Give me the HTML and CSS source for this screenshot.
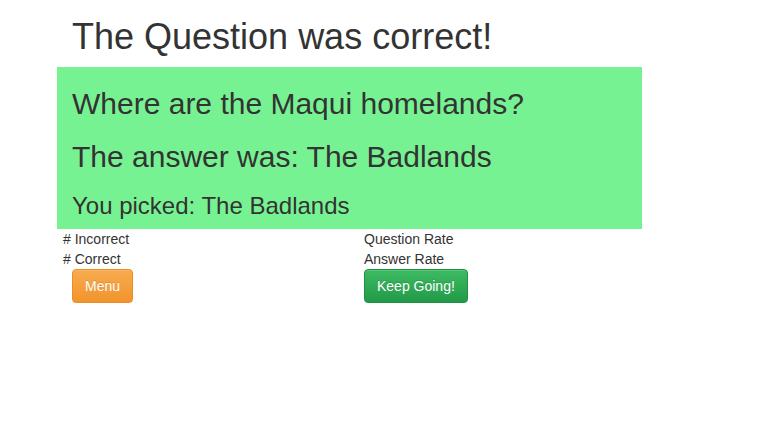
FILE: index.html
```html
<!DOCTYPE html>
<html>
<head>
<meta charset="utf-8">
<link rel="stylesheet" href="styles.css">
</head>
<body>
<div class="page">
  <h1 class="title">The Question was correct!</h1>
  <div class="result">
    <h2 class="question">Where are the Maqui homelands?</h2>
    <h2 class="answer">The answer was: The Badlands</h2>
    <h3 class="picked">You picked: The Badlands</h3>
  </div>
  <div class="stats">
    <div class="col col-left">
      <div class="stat"># Incorrect</div>
      <div class="stat"># Correct</div>
      <button class="btn btn-warning">Menu</button>
    </div>
    <div class="col col-right">
      <div class="stat">Question Rate</div>
      <div class="stat">Answer Rate</div>
      <button class="btn btn-success">Keep Going!</button>
    </div>
  </div>
</div>
</body>
</html>
```

FILE: styles.css
```css
* { box-sizing: border-box; }
html, body {
  margin: 0;
  padding: 0;
  background: #fff;
  font-family: "Liberation Sans", Arial, sans-serif;
  font-size: 14px;
  line-height: 20px;
  color: #333;
}
.page {
  width: 585px;
  margin-left: 57px;
  display: flow-root;
}
.title {
  font-size: 36px;
  font-weight: 400;
  line-height: 1.1;
  margin: 17px 0 10px;
  padding: 0 15px;
}
.result {
  display: flow-root;
  background: #77f292;
  padding: 0 15px;
}
.result h2, .result h3 {
  font-weight: 400;
  line-height: 1.1;
  margin: 20px 0 10px;
}
.result h2 { font-size: 30px; }
.result h3 { font-size: 24px; }
.stats {
  display: grid;
  grid-template-columns: 307px 1fr;
}
.col {
  display: flex;
  flex-direction: column;
  align-items: flex-start;
}
.col-left .stat { padding-left: 6px; }
.col-left .btn { margin-left: 15px; }
.btn {
  font-family: "Liberation Sans", Arial, sans-serif;
  font-size: 14px;
  line-height: 20px;
  padding: 6px 12px;
  border-radius: 4px;
  border: 1px solid transparent;
  color: #fff;
  text-shadow: 0 -1px 0 rgba(0,0,0,0.15);
  box-shadow: inset 0 1px 0 rgba(255,255,255,0.15), 0 1px 1px rgba(0,0,0,0.075);
  cursor: pointer;
}
.btn-warning {
  background: linear-gradient(to bottom, #f7ab4f 0%, #f2942c 100%);
  border-color: #ec8c22;
}
.btn-success {
  background: linear-gradient(to bottom, #3dbb63 0%, #219a48 100%);
  border-color: #1f8f43;
}
```
